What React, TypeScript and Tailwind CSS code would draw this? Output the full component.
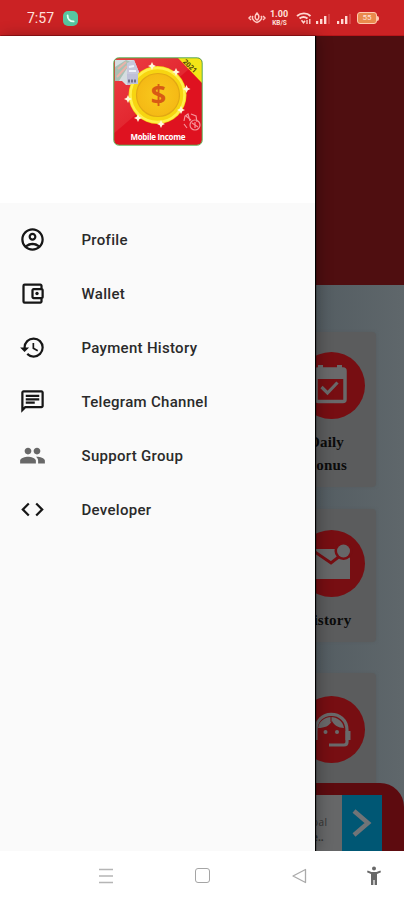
import React from "react";
import {
  MdCode,
  MdHistory,
  MdOutlineAccountBalanceWallet,
  MdOutlineAccountCircle,
  MdOutlineChat,
  MdPeople,
} from "react-icons/md";

const menu = [
  { label: "Profile", Icon: MdOutlineAccountCircle, tone: "text-[#161616]" },
  { label: "Wallet", Icon: MdOutlineAccountBalanceWallet, tone: "text-[#161616]" },
  { label: "Payment History", Icon: MdHistory, tone: "text-[#161616]" },
  { label: "Telegram Channel", Icon: MdOutlineChat, tone: "text-[#161616]" },
  { label: "Support Group", Icon: MdPeople, tone: "text-[#686868]" },
  { label: "Developer", Icon: MdCode, tone: "text-[#161616]" },
];

function Signal() {
  return (
    <svg width="15" height="11" viewBox="0 0 15 11" fill="#ffd9d3">
      <rect x="0" y="7" width="2.2" height="3" />
      <rect x="4" y="5" width="2.4" height="5" />
      <rect x="8" y="2" width="2.4" height="8" />
      <rect x="12" y="0" width="2" height="10" opacity="0.2" />
    </svg>
  );
}

function StatusBar() {
  return (
    <header className="flex h-9 shrink-0 items-center border-b border-[#b8161a] bg-[#cb2224] pl-[27px] pr-[25px] text-[#ffe1dc]">
      <span className="w-9 pt-px text-[14px] leading-none">7:57</span>
      <svg className="mt-px" width="15" height="15" viewBox="0 0 15 15">
        <rect width="15" height="15" rx="5" fill="#58c6a0" />
        <path d="M4.600 4.500C4.500 8 7 10.500 10.600 10.400" fill="none" stroke="#e6fff4" strokeWidth="1.800" strokeLinecap="round" />
      </svg>
      <div className="ml-auto flex items-center pt-px">
        <svg width="18" height="12" viewBox="0 0 18 12" fill="none" stroke="#ffc9c3" strokeWidth="1.5">
          <path d="M3 4 1 6l2 2M15 4l2 2-2 2M5 4C3.500 6 5 9 9 10.500c4-1.500 5.500-4.500 4-6.500M9 1C6.500 3.500 6.500 6.500 9 8 11.500 6.500 11.500 3.500 9 1Z" />
        </svg>
        <div className="ml-[3px] flex w-[20px] flex-col items-center font-bold">
          <span className="text-[9px] leading-[8px]">1.00</span>
          <span className="-mr-px pt-[2px] text-[6.5px] leading-[6px]">KB/S</span>
        </div>
        <svg className="ml-[7px]" width="16" height="13" viewBox="0 0 16 13" fill="none" stroke="#ffd9d3">
          <path d="M1 4C5 .5 11 .5 14.500 4M3.500 6.500C6 4.500 9 4.500 11.500 6.500" strokeWidth="1.900" />
          <path d="m5.500 8.300 2 2.500 1.500-2" strokeWidth="1.500" />
          <path d="M11 12V8m2.800-1v5" strokeWidth="1.300" />
        </svg>
        <div className="ml-[4px] mt-[3px] flex gap-[6px]">
          <Signal />
          <Signal />
        </div>
        <div className="ml-[5px] flex h-[12px] w-[20px] items-center justify-center rounded-[3px] border-[1.5px] border-[#ffc8ad] bg-[#e98a4c] text-[8px] leading-none">
          55
        </div>
        <div className="h-[5px] w-[2px] rounded-r bg-[#ffc8ad]" />
      </div>
    </header>
  );
}

function AppLogo() {
  const sparkles = [
    [39, 9], [63, 15], [73.500, 32], [68, 53], [48, 67], [25, 61], [15, 42],
  ];
  return (
    <svg width="90" height="89" viewBox="0 0 90 89">
      <defs>
        <clipPath id="logoClip"><rect x="1" y="1" width="88" height="87" rx="5" /></clipPath>
        <linearGradient id="logoRed" x1="0" x2="1" y1="0" y2="1">
          <stop stopColor="#ed4045" /><stop offset="1" stopColor="#d80f1b" />
        </linearGradient>
        <radialGradient id="coin"><stop stopColor="#f9c91d" /><stop offset="1" stopColor="#f5b915" /></radialGradient>
      </defs>
      <g clipPath="url(#logoClip)">
        <rect width="90" height="90" fill="#df1220" />
        <path d="M0 0H90L0 77Z" fill="url(#logoRed)" />
        <path d="M2 3h19l5 12v13H13L9 24H2Z" fill="#d5dde0" />
        <path d="m2 10 11-7 5 2-12 19H2Z" fill="#a9c0b3" />
        <path d="m5 12 8-7M4 20 14 9" stroke="#e9b3a9" strokeWidth="2" />
        <path d="m14 6 7-3 5 12v13H14Z" fill="#c7c8dc" />
        <path d="m16 10 5-1M16 14h7" stroke="#eef2fa" strokeWidth="2" />
        <circle cx="44.500" cy="38" r="29" fill="#f7d511" />
        <circle cx="44.500" cy="38" r="27" fill="none" stroke="#fff04a" strokeWidth="2.500" />
        <circle cx="45" cy="38" r="21.500" fill="url(#coin)" stroke="#e2a814" strokeWidth="1.200" />
        <path d="M14 17h11v10H14Z" fill="#bfc0d8" />
        <path d="M15 24h9" stroke="#73708b" strokeWidth="3" strokeDasharray="2 1" />
        <g fill="#fff8d8">
          {sparkles.map(([x, y]) => (
            <path key={x} transform={`translate(${x} ${y})`} d="M0-4 1.300-1.300 4 0 1.300 1.300 0 4-1.300 1.300-4 0-1.300-1.300Z" />
          ))}
        </g>
        <text x="45.500" y="47" textAnchor="middle" fontFamily="Open Sans" fontWeight="700" fontSize="27" fill="#d85a14">$</text>
        <path d="M64 0H90V27Z" fill="#f3e616" />
        <text transform="translate(77 9) rotate(43)" textAnchor="middle" dominantBaseline="central" fontFamily="Open Sans" fontWeight="700" fontSize="7" fill="#51440c">2021</text>
        <g fill="none" stroke="#f59499" strokeWidth="1.200">
          <path d="m71 64 1-5 3-2 2 7m1-7 5 2 1 6m-13 2 3 4m-1-12 5 4" />
          <circle cx="82" cy="68" r="5" /><path d="m79 66 6 4m-3-5v6" />
        </g>
        <text x="45" y="83" textAnchor="middle" textLength="55" fontFamily="Open Sans" fontWeight="700" fontSize="8" fill="#fff">Mobile Income</text>
      </g>
      <rect x="0.800" y="0.800" width="88.400" height="87.400" rx="5" fill="none" stroke="#58a84a" strokeWidth="1" />
    </svg>
  );
}

function Drawer() {
  return (
    <aside className="z-10 flex w-[315px] shrink-0 flex-col bg-[#fafafa] shadow-[1px_0_1px_#000,3px_0_14px_rgba(0,0,0,0.3)]">
      <div className="flex h-[167px] shrink-0 justify-center bg-white pt-[21px]">
        <AppLogo />
      </div>
      <nav className="flex flex-col pt-[9px]">
        {menu.map(({ label, Icon, tone }) => (
          <a key={label} className="flex h-[54px] items-center pl-[18.5px]">
            <Icon className={`size-[27px] ${tone}`} />
            <span className="ml-[36px] pt-[2px] text-[15px] font-medium tracking-[0.3px] text-[#2a2a2a]">{label}</span>
          </a>
        ))}
      </nav>
    </aside>
  );
}

function CalendarIcon() {
  return (
    <svg width="67" height="67" viewBox="0 0 67 67">
      <circle cx="33.500" cy="33.500" r="33.500" fill="#770e12" />
      <rect x="18" y="17" width="29" height="32.500" rx="2" fill="none" stroke="#69696a" strokeWidth="3.500" />
      <path d="M18 17h29v10H18ZM20 13h5v6h-5ZM39 13h5v6h-5Z" fill="#69696a" />
      <path d="m23.500 35 6 6 10-10.500" fill="none" stroke="#69696a" strokeWidth="3.200" />
    </svg>
  );
}

function MailIcon() {
  return (
    <svg width="67" height="67" viewBox="0 0 67 67">
      <circle cx="33.500" cy="33.500" r="33.500" fill="#770e12" />
      <path d="M13 19h39v30H13Z" fill="#666768" />
      <path d="m14 20 19 13 14-11" fill="none" stroke="#770e12" strokeWidth="3" />
      <circle cx="45.500" cy="21" r="9" fill="#770e12" />
      <circle cx="45.500" cy="21" r="6.500" fill="#666768" />
    </svg>
  );
}

function AgentIcon() {
  return (
    <svg width="67" height="67" viewBox="0 0 67 67">
      <circle cx="33.500" cy="33.500" r="33.500" fill="#770e12" />
      <g fill="none" stroke="#69696a" strokeWidth="3.200">
        <path d="M18 35C17 13 49 13 49 34v12q0 3-3 3H31" />
        <path d="M50 35v9M17 35v9" strokeWidth="5" />
      </g>
      <path d="M20 32c1-7 7-11 13-11s12 4 13 11c-6 0-10-3-12-7-3 5-7 7-14 7Z" fill="#69696a" />
      <path d="M33 21v5" stroke="#770e12" />
      <circle cx="27.500" cy="36" r="2" fill="#69696a" />
      <circle cx="39" cy="36" r="2" fill="#69696a" />
    </svg>
  );
}

const labelStyle = "mt-[12px] w-[90px] pr-[9px] text-center font-['Liberation_Serif',serif] text-[15px] font-bold leading-[23px] tracking-[0.2px] text-[#0b0b0b]";
const cardStyle = "flex w-[90px] shrink-0 flex-col items-center rounded-[4px] bg-[#5b5c5d] shadow-[0_0_3px_#565c5f]";

function Dashboard() {
  return (
    <main className="flex min-w-0 flex-1 flex-col overflow-hidden bg-linear-to-r from-[#545d62] to-[#5f676b]">
      <div className="h-[249px] shrink-0 bg-[#4f0e10]" />
      <div className="-ml-[29px] flex h-[498px] shrink-0 flex-col overflow-hidden pt-[47px]">
        <section className={`${cardStyle} h-[155px] pt-5`}>
          <CalendarIcon />
          <p className={labelStyle}>Daily<br />Bonus</p>
        </section>
        <section className={`${cardStyle} mt-[22px] h-[133px] pt-[21px]`}>
          <MailIcon />
          <p className={labelStyle}>History</p>
        </section>
        <section className={`${cardStyle} mt-[31px] h-[133px] pt-[23px]`}>
          <AgentIcon />
          <p className="mt-[15px] w-[90px] pr-[11px] text-center font-['Liberation_Serif',serif] text-[15px] font-bold leading-[23px] text-[#0b0b0b]">Support</p>
        </section>
      </div>
      <footer className="flex h-[68px] shrink-0 rounded-tr-[24px] bg-[#5d0b0f] pt-3">
        <div className="w-[27px] overflow-hidden bg-[#666768] pt-[20px] font-['Open_Sans',sans-serif] text-[10px] leading-[15px] text-[#333]">
          <p className="-ml-[3px] tracking-[0.5px]">oal</p>
          <p className="-ml-[3px] font-bold">e..</p>
        </div>
        <div className="flex w-10 items-center justify-center bg-[#005774]">
          <svg width="20" height="28" viewBox="0 0 20 28" fill="none" stroke="#717477" strokeWidth="4.500">
            <path d="m2 2 14 12L2 26" />
          </svg>
        </div>
      </footer>
    </main>
  );
}

function NavigationBar() {
  return (
    <footer className="z-20 flex h-[49px] shrink-0 items-center bg-white pl-[99px]">
      <svg width="14" height="16" viewBox="0 0 14 16" stroke="#b5b5b5" strokeWidth="1.300">
        <path d="M0 1.500h14M0 8h14M0 14.500h14" />
      </svg>
      <div className="ml-[82px] size-[15px] rounded-[3px] border-[1.300px] border-[#a5a5a5]" />
      <svg className="ml-[82px]" width="15" height="16" viewBox="0 0 15 16" fill="none" stroke="#aaa" strokeWidth="1.300" strokeLinejoin="round">
        <path d="M13.500 1.500v13L1 8Z" />
      </svg>
      <svg className="ml-[60px]" width="14" height="20" viewBox="0 0 14 20" fill="#686868">
        <circle cx="7" cy="2.500" r="2" />
        <path d="M.6 4.500 4.500 6h5l3.900-1.500.6 1.700-4 1.700V19H7.600v-5H6.400v5H4V7.900L0 6.200Z" />
      </svg>
    </footer>
  );
}

export default function App() {
  return (
    <div className="flex h-[900px] w-[404px] flex-col overflow-hidden bg-white font-['Roboto',sans-serif]">
      <StatusBar />
      <div className="flex h-[815px] shrink-0">
        <Drawer />
        <Dashboard />
      </div>
      <NavigationBar />
    </div>
  );
}
